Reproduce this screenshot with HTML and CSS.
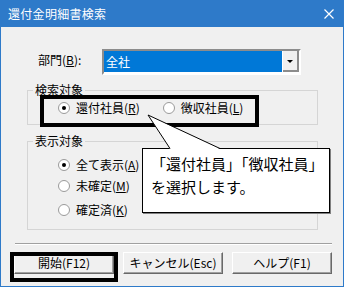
FILE: index.html
```html
<!DOCTYPE html>
<html>
<head>
<meta charset="utf-8">
<title>還付金明細書検索</title>
<link rel="stylesheet" href="styles.css">
</head>
<body>
<div class="window">
  <div class="titlebar">
    <span class="title">還付金明細書検索</span>
    <svg class="close" width="10" height="10" viewBox="0 0 10 10"><path d="M0.5 0.5 L9.5 9.5 M9.5 0.5 L0.5 9.5" stroke="#fff" stroke-width="1.2" fill="none"/></svg>
  </div>
  <div class="content">
    <div class="dept-row">
      <span class="dept-label">部門(<u>B</u>):</span>
      <div class="combo">
        <div class="combo-value">全社</div>
        <div class="combo-btn"><span class="arrow"></span></div>
      </div>
    </div>

    <fieldset class="group group-search">
      <legend>検索対象</legend>
      <div class="radio-line">
        <label class="radio"><span class="dot on"></span>還付社員(<u>R</u>)</label>
        <label class="radio second"><span class="dot"></span>徴収社員(<u>L</u>)</label>
      </div>
    </fieldset>

    <fieldset class="group group-show">
      <legend>表示対象</legend>
      <label class="radio row1"><span class="dot on"></span>全て表示(<u>A</u>)</label>
      <label class="radio row2"><span class="dot"></span>未確定(<u>M</u>)</label>
      <label class="radio row3"><span class="dot"></span>確定済(<u>K</u>)</label>
    </fieldset>

    <div class="separator"></div>

    <div class="buttons">
      <button class="btn">開始(F12)</button>
      <button class="btn">キャンセル(Esc)</button>
      <button class="btn">ヘルプ(F1)</button>
    </div>
  </div>

  <!-- annotations laid over the dialog -->
  <div class="mark mark-radio"></div>
  <div class="mark mark-start"></div>
  <div class="callout">
    <div class="callout-text">「還付社員」「徴収社員」<br>を選択します。</div>
  </div>
  <svg class="pointer" width="90" height="42" viewBox="0 0 90 42">
    <polygon points="6,5 28,39 78,39" fill="#fff"/>
    <polyline points="28,38.5 6,5 78,38.5" fill="none" stroke="#000" stroke-width="1"/>
  </svg>
</div>
</body>
</html>
```

FILE: styles.css
```css
body {
    margin: 0;
    background: #fff;
    font-family: "Noto Sans CJK JP", "Liberation Sans", sans-serif;
    font-size: 12px;
    color: #000;
}
.window {
    position: relative;
    width: 344px;
    height: 287px;
    box-sizing: border-box;
    border: 1px solid #2e7ac9;
    background: #f0f0f0;
}
.titlebar {
    height: 27px;
    margin: -1px -1px 0 -1px;
    background: #2e7ac9;
    color: #fff;
    display: flex;
    align-items: center;
    padding: 0 10px 0 8px;
}
.title {
    flex: 1;
    font-size: 12px;
    line-height: 14px;
    letter-spacing: 0.3px;
}
.close {
    display: block;
    margin-top: 1px;
}
.content {
    padding: 22px 0 0 0;
}
.dept-row {
    display: flex;
    align-items: center;
    height: 26px;
    padding-left: 37px;
}
.dept-label {
    width: 64px;
    padding-bottom: 4px;
    line-height: 14px;
}
.combo {
    width: 199px;
    height: 26px;
    box-sizing: border-box;
    border: 2px solid;
    border-color: #8c8c8c #fff #fff #8c8c8c;
    background: #fff;
    display: flex;
    padding: 0 0 1px 0;
}
.combo-value {
    flex: 1;
    background: #0078d7;
    color: #fff;
    font-size: 12px;
    line-height: 21px;
    padding-left: 2px;
    margin-right: 1px;
}
.combo-btn {
    width: 16px;
    box-sizing: border-box;
    border-right: 2px solid #8c8c8c;
    border-bottom: 2px solid #8c8c8c;
    background: #f0f0f0;
    display: flex;
    align-items: center;
    justify-content: center;
}
.arrow {
    width: 0;
    height: 0;
    border-left: 3px solid transparent;
    border-right: 3px solid transparent;
    border-top: 3px solid #000;
    margin-top: 1px;
}
.group {
    margin: 8px 0 0 26px;
    width: 291px;
    box-sizing: border-box;
    border: 1px solid #d5d5d5;
    padding: 1px 0 6px 30px;
    min-width: 0;
}
.group legend {
    margin-left: -25px;
    padding: 0 2px;
    line-height: 14px;
    font-size: 12px;
}
.group-show {
    margin-top: 9px;
    padding: 7px 0 9px 30px;
}
.radio-line {
    display: flex;
    height: 20px;
    align-items: center;
}
.radio {
    display: flex;
    align-items: center;
    height: 20px;
    line-height: 14px;
}
.radio.second {
    margin-left: 23px;
}
.row2 {
    margin-top: 1px;
}
.row3 {
    margin-top: 4px;
}
.dot {
    width: 12px;
    height: 12px;
    box-sizing: border-box;
    border-radius: 50%;
    border: 1px solid #9a9a9a;
    background: #fff;
    margin-right: 6px;
    display: flex;
    align-items: center;
    justify-content: center;
}
.dot.on::after {
    content: "";
    width: 4px;
    height: 4px;
    border-radius: 50%;
    background: #000;
}
.separator {
    margin: 13px 0 0 14px;
    width: 317px;
    height: 1px;
    background: #a0a0a0;
    border-bottom: 1px solid #fff;
}
.buttons {
    display: flex;
    gap: 9px;
    margin: 7px 0 0 13px;
}
.btn {
    width: 100px;
    height: 22px;
    box-sizing: border-box;
    border: 1px solid;
    border-color: #fff #696969 #696969 #fff;
    box-shadow: inset -1px -1px 0 #a0a0a0;
    background: #f0f0f0;
    font-family: "Noto Sans CJK JP", "Liberation Sans", sans-serif;
    font-size: 12px;
    line-height: 14px;
    padding: 0;
    color: #000;
}
.mark {
    position: absolute;
    border: 4px solid #000;
    box-sizing: border-box;
}
.mark-radio {
    left: 39px;
    top: 94px;
    width: 219px;
    height: 32px;
}
.mark-start {
    left: 9px;
    top: 251px;
    width: 108px;
    height: 30px;
}
.callout {
    position: absolute;
    left: 141px;
    top: 147px;
    width: 188px;
    height: 65px;
    box-sizing: border-box;
    border: 1px solid #000;
    box-shadow: 1px 1px 0 #808080;
    background: #fff;
    padding: 3px 0 0 8px;
}
.callout-text {
    font-size: 15px;
    line-height: 23px;
    white-space: nowrap;
}
.pointer {
    position: absolute;
    left: 141px;
    top: 109px;
}
```
